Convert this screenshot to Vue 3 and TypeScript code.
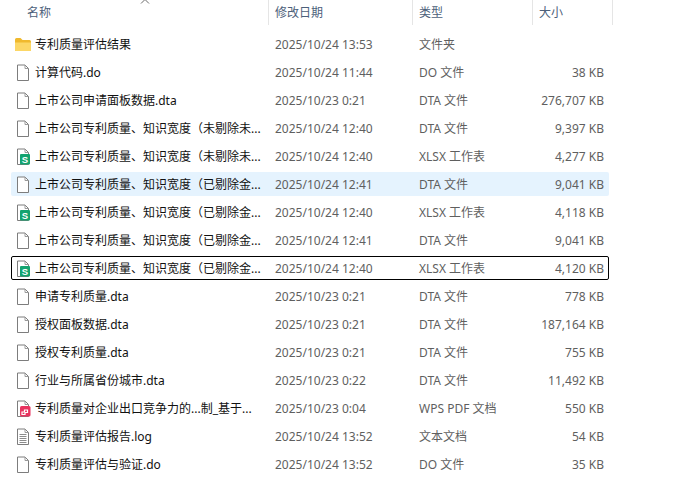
<script setup lang="ts">
type Kind = 'folder' | 'doc' | 'sheet' | 'pdf' | 'log'
interface Row { kind: Kind; name: string; date: string; type: string; size: string; state?: 'hover' | 'focus' }
const long = '上市公司专利质量、知识宽度'
const rows: Row[] = [
  { kind: 'folder', name: '专利质量评估结果', date: '2025/10/24 13:53', type: '文件夹', size: '' },
  { kind: 'doc', name: '计算代码.do', date: '2025/10/24 11:44', type: 'DO 文件', size: '38 KB' },
  { kind: 'doc', name: '上市公司申请面板数据.dta', date: '2025/10/23 0:21', type: 'DTA 文件', size: '276,707 KB' },
  { kind: 'doc', name: long + '（未剔除未...', date: '2025/10/24 12:40', type: 'DTA 文件', size: '9,397 KB' },
  { kind: 'sheet', name: long + '（未剔除未...', date: '2025/10/24 12:40', type: 'XLSX 工作表', size: '4,277 KB' },
  { kind: 'doc', name: long + '（已剔除金...', date: '2025/10/24 12:41', type: 'DTA 文件', size: '9,041 KB', state: 'hover' },
  { kind: 'sheet', name: long + '（已剔除金...', date: '2025/10/24 12:40', type: 'XLSX 工作表', size: '4,118 KB' },
  { kind: 'doc', name: long + '（已剔除金...', date: '2025/10/24 12:41', type: 'DTA 文件', size: '9,041 KB' },
  { kind: 'sheet', name: long + '（已剔除金...', date: '2025/10/24 12:40', type: 'XLSX 工作表', size: '4,120 KB', state: 'focus' },
  { kind: 'doc', name: '申请专利质量.dta', date: '2025/10/23 0:21', type: 'DTA 文件', size: '778 KB' },
  { kind: 'doc', name: '授权面板数据.dta', date: '2025/10/23 0:21', type: 'DTA 文件', size: '187,164 KB' },
  { kind: 'doc', name: '授权专利质量.dta', date: '2025/10/23 0:21', type: 'DTA 文件', size: '755 KB' },
  { kind: 'doc', name: '行业与所属省份城市.dta', date: '2025/10/23 0:22', type: 'DTA 文件', size: '11,492 KB' },
  { kind: 'pdf', name: '专利质量对企业出口竞争力的...制_基于...', date: '2025/10/23 0:04', type: 'WPS PDF 文档', size: '550 KB' },
  { kind: 'log', name: '专利质量评估报告.log', date: '2025/10/24 13:52', type: '文本文档', size: '54 KB' },
  { kind: 'doc', name: '专利质量评估与验证.do', date: '2025/10/24 13:52', type: 'DO 文件', size: '35 KB' },
]
</script>

<template>
  <div class="page">
    <header class="head">
      <div class="hcell h-name">
        <span>名称</span>
        <svg class="sort" width="10" height="5" viewBox="0 0 10 5"><path d="M1 4.500 5 .5l4 4" fill="none" stroke="#6b6b6b" /></svg>
      </div>
      <div class="hcell h-date">修改日期</div>
      <div class="hcell h-type">类型</div>
      <div class="hcell h-size">大小</div>
    </header>
    <ul class="list">
      <li v-for="(r, i) in rows" :key="i" class="row" :class="r.state">
        <svg class="icon" width="18" height="18" viewBox="0 0 18 18">
          <template v-if="r.kind === 'folder'">
            <path d="M1 3.500A1.500 1.500 0 0 1 2.500 2h4l2 2H15.500A1.500 1.500 0 0 1 17 5.500V14a1 1 0 0 1-1 1H2a1 1 0 0 1-1-1Z" fill="#f0b92d" />
            <path d="M1 6.500h16V14a1 1 0 0 1-1 1H2a1 1 0 0 1-1-1Z" fill="#fcd766" />
          </template>
          <template v-else>
            <path d="M3.500 1h7.500l3.500 3.500v12h-11Z" fill="#fff" stroke="#7d7d7d" />
            <path d="M11 1v3.500h3.500" fill="none" stroke="#9a9a9a" />
            <path v-if="r.kind === 'log'" d="M5.500 6.500h7M5.500 8.500h7M5.500 10.500h7M5.500 12.500h7M5.500 14.500h7" stroke="#8c8c8c" />
            <template v-if="r.kind === 'sheet'">
              <rect x="6" y="6" width="10" height="10.500" rx="1" fill="#13a36f" />
              <text x="11" y="14.800" text-anchor="middle" class="s">S</text>
            </template>
            <template v-if="r.kind === 'pdf'">
              <rect x="6" y="6" width="10.500" height="10.500" rx="1.500" fill="#e8335f" />
              <path d="M8 12h2.500v-2h3v2.500H11v2H8Z" fill="none" stroke="#fff" stroke-width="1.200" />
            </template>
          </template>
        </svg>
        <span class="name">{{ r.name }}</span>
        <span class="cell">{{ r.date }}</span>
        <span class="cell">{{ r.type }}</span>
        <span class="cell size">{{ r.size }}</span>
      </li>
    </ul>
  </div>
</template>

<style>
html, body { margin: 0; background: #fff; }
</style>

<style scoped>
.page {
  width: 674px;
  height: 503px;
  overflow: hidden;
  background: #fff;
  font-family: "Noto Sans", "Noto Sans CJK SC", sans-serif;
  font-size: 12px;
}
.head {
  display: flex;
  height: 25px;
}
.hcell {
  position: relative;
  box-sizing: border-box;
  height: 25px;
  line-height: 26px;
  padding-left: 6px;
  color: #4c607a;
  border-right: 1px solid #e5e5e5;
}
.h-name { width: 269px; padding-left: 27px; }
.h-date { width: 144px; }
.h-type { width: 120px; }
.h-size { width: 80px; }
.sort {
  position: absolute;
  left: 140px;
  top: -1px;
}
.list {
  list-style: none;
  margin: 7px 0 0 11px;
  padding: 0;
  width: 598px;
}
.row {
  box-sizing: border-box;
  display: grid;
  grid-template-columns: 24px 240px 144px 100px 1fr;
  align-items: center;
  height: 24px;
  margin-bottom: 4px;
  padding-right: 5px;
  border-radius: 2px;
  line-height: 26px;
  white-space: nowrap;
}
.row.hover { background: #e5f3fe; }
.row.focus { outline: 1px solid #000; outline-offset: -1px; }
.icon { margin-left: 3px; }
.name { color: #111; }
.cell { color: #5f5f5f; }
.size { text-align: right; }
.s {
  font-family: "Liberation Sans", sans-serif;
  font-size: 9.500px;
  font-weight: 700;
  fill: #fff;
}
</style>
